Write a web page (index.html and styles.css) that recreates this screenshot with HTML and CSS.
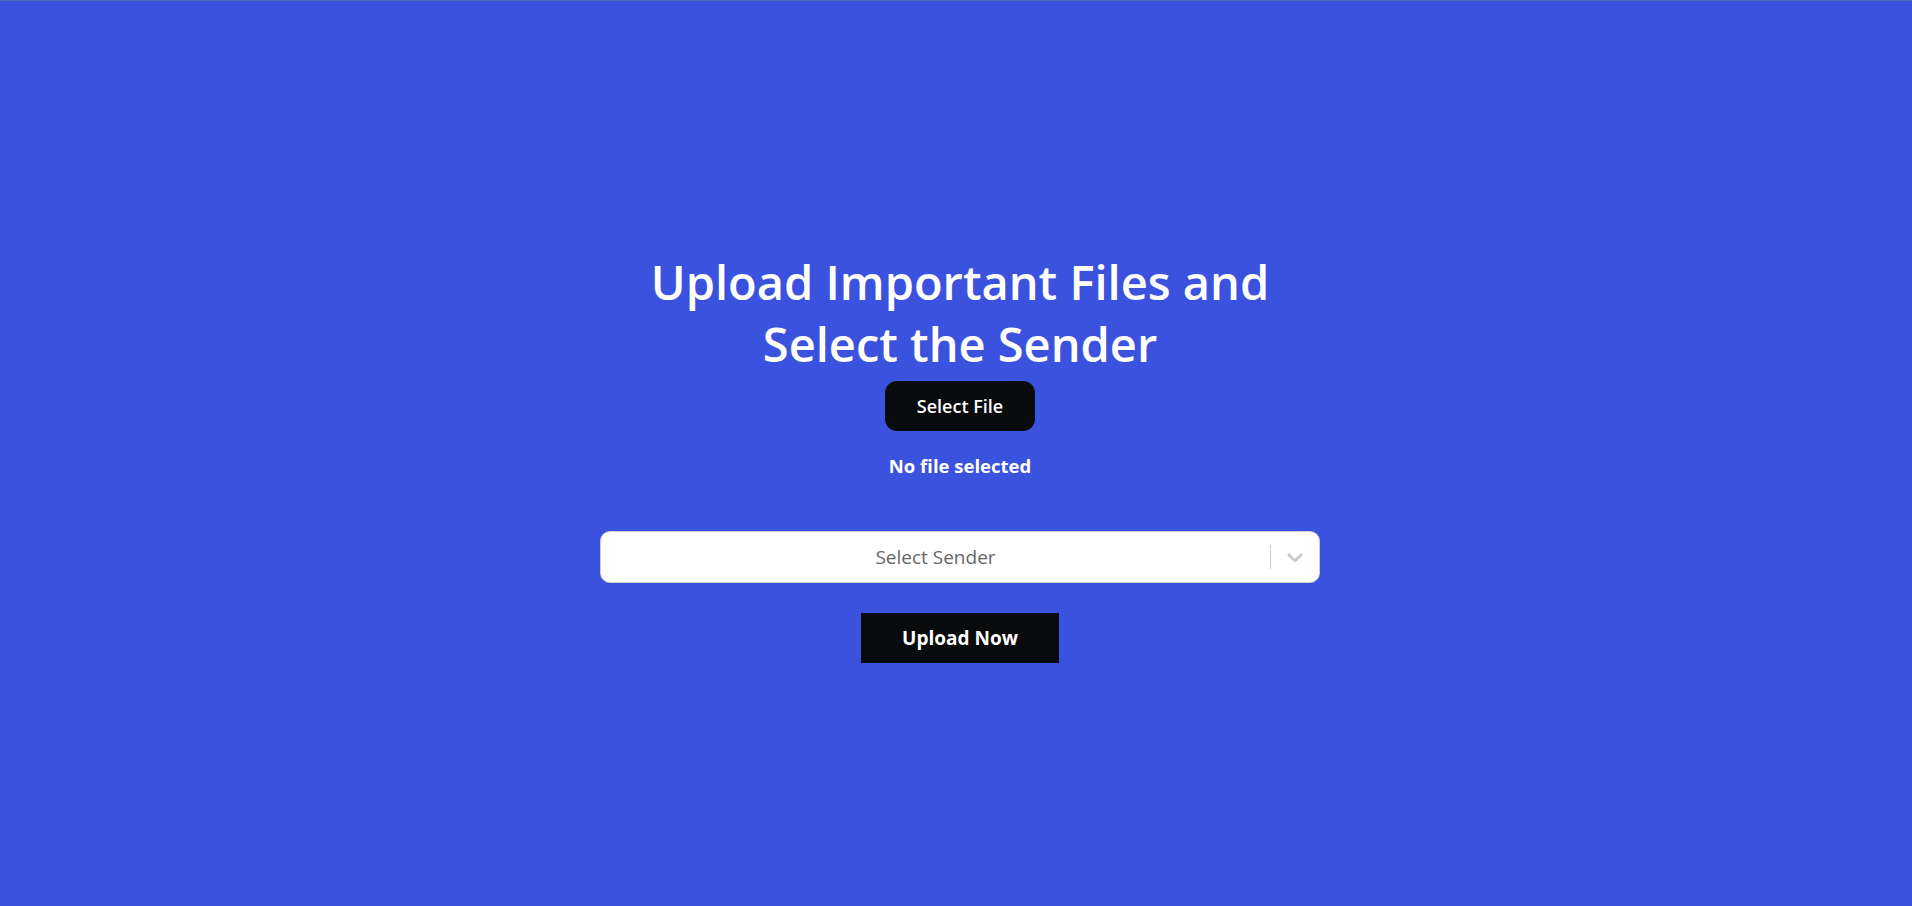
FILE: index.html
```html
<!DOCTYPE html>
<html lang="en">
<head>
<meta charset="utf-8">
<title>Upload Files</title>
<link rel="stylesheet" href="styles.css">
</head>
<body>
<main class="page">
  <section class="uploader">
    <h1 class="title">Upload Important Files and Select the Sender</h1>
    <label class="file-btn">Select File<input type="file" class="file-input"></label>
    <p class="file-status">No file selected</p>
    <div class="select">
      <div class="select-value">Select Sender</div>
      <div class="select-indicators">
        <span class="select-sep"></span>
        <span class="select-arrow">
          <svg viewBox="0 0 20 20" width="26" height="26" aria-hidden="true"><path d="M4.516 7.548c0.436-0.446 1.043-0.481 1.576 0l3.908 3.747 3.908-3.747c0.533-0.481 1.141-0.446 1.574 0 0.436 0.445 0.408 1.197 0 1.615-0.406 0.418-4.695 4.502-4.695 4.502-0.217 0.223-0.502 0.335-0.787 0.335s-0.57-0.112-0.789-0.335c0 0-4.287-4.084-4.695-4.502s-0.436-1.17 0-1.615z" fill="currentColor"/></svg>
        </span>
      </div>
    </div>
    <button class="upload-btn" type="button">Upload Now</button>
  </section>
</main>
</body>
</html>
```
FILE: styles.css
```css
html, body {
  margin: 0;
  padding: 0;
}
body {
  background: #3b52de;
  font-family: "Open Sans", "Noto Sans", sans-serif;
  border-top: 1px solid #4b6aa6;
  box-sizing: border-box;
}
.page {
  min-height: 905px;
  display: flex;
  align-items: center;
  justify-content: center;
  padding: 6px 0 0 8px;
  box-sizing: border-box;
}
.uploader {
  width: 720px;
  display: flex;
  flex-direction: column;
  align-items: center;
}
.title {
  margin: 0;
  color: #fff;
  font-size: 47px;
  line-height: 62px;
  font-weight: 600;
  text-align: center;
  padding: 0 30px;
}
.file-btn {
  margin-top: 6px;
  width: 150px;
  height: 50px;
  box-sizing: border-box;
  border-radius: 12px;
  background: #0a0b0d;
  color: #fff;
  font-size: 18px;
  font-weight: 600;
  display: flex;
  align-items: center;
  justify-content: center;
  cursor: pointer;
}
.file-input {
  display: none;
}
.file-status {
  margin: 23px 0 0;
  color: #fff;
  font-size: 18.5px;
  line-height: 24px;
  font-weight: 700;
}
.select {
  margin-top: 53px;
  width: 720px;
  height: 52px;
  box-sizing: border-box;
  background: #fff;
  border: 1px solid #ccc;
  border-radius: 10px;
  display: flex;
  align-items: center;
}
.select-value {
  flex: 1;
  text-align: center;
  color: #666;
  font-size: 19px;
}
.select-indicators {
  display: flex;
  align-items: center;
  align-self: stretch;
}
.select-sep {
  width: 1px;
  height: 24px;
  background: #ccc;
}
.select-arrow {
  width: 48px;
  display: flex;
  align-items: center;
  justify-content: center;
  color: #ccc;
}
.select-arrow svg {
  display: block;
}
.upload-btn {
  margin-top: 30px;
  width: 198px;
  height: 50px;
  border: 0;
  border-radius: 0;
  background: #0a0b0d;
  color: #fff;
  font-family: inherit;
  font-size: 19px;
  font-weight: 700;
  cursor: pointer;
}
```
